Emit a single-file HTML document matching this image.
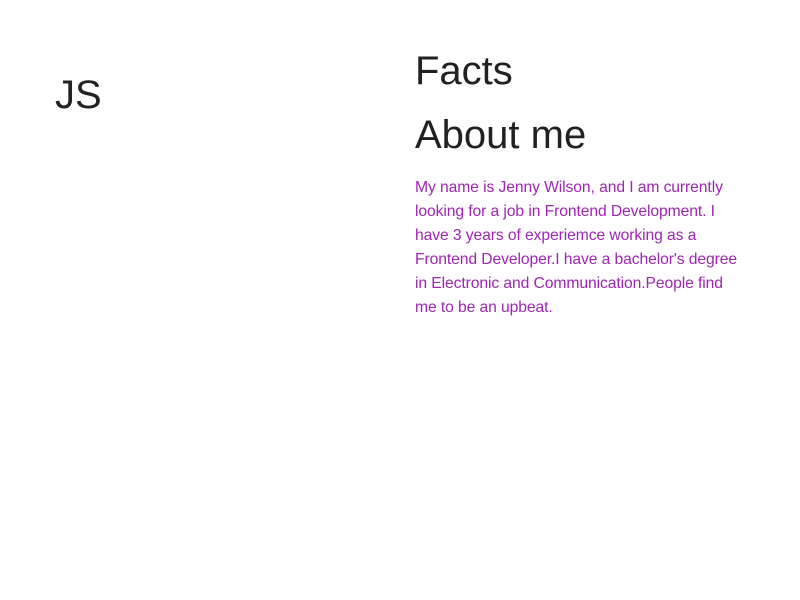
<!DOCTYPE html>
<html><head><style>
body{margin:0;width:800px;height:600px;background:#fff;font-family:"Liberation Sans",Roboto,sans-serif;color:#212121;position:relative;overflow:hidden}
.h{position:absolute;font-size:40px;line-height:48px;margin:0;font-weight:400;white-space:nowrap}
p{position:absolute;left:415px;top:176px;margin:0;font-size:15.7px;line-height:24px;color:#9c27b0;white-space:nowrap;letter-spacing:-0.1px}
</style></head><body>
<div class="h" style="left:55px;top:71px">JS</div>
<div class="h" style="left:415px;top:47px">Facts</div>
<div class="h" style="left:415px;top:111px">About me</div>
<p>My name is Jenny Wilson, and I am currently<br>looking for a job in Frontend Development. I<br>have 3 years of experiemce working as a<br>Frontend Developer.I have a bachelor's degree<br>in Electronic and Communication.People find<br>me to be an upbeat.</p>
</body></html>
